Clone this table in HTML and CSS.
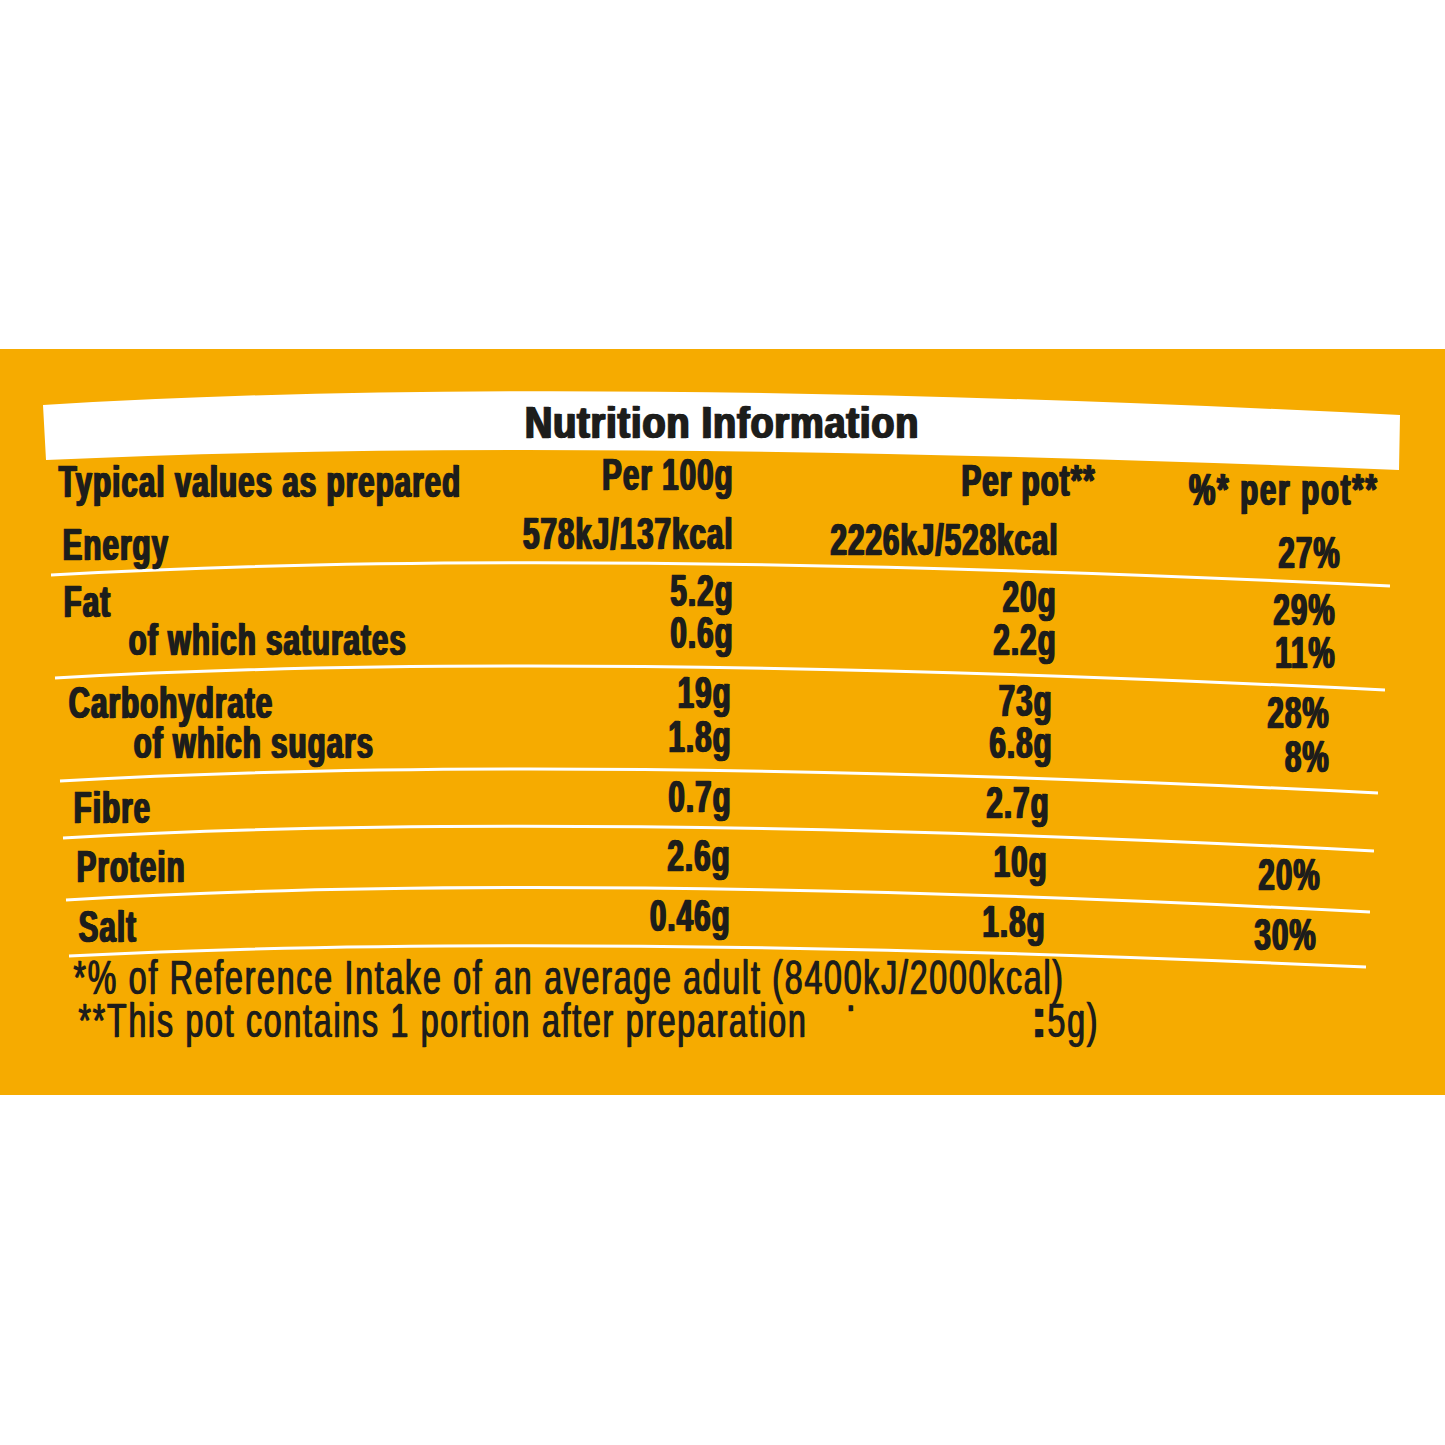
FILE: index.html
```html
<!DOCTYPE html>
<html lang="en">
<head>
<meta charset="utf-8">
<title>Nutrition Information</title>
<link rel="stylesheet" href="styles.css">
</head>
<body>
<section class="band">
  <h1 class="title"><span>Nutrition Information</span></h1>
  <div class="panel">
    <div class="row hdr">
      <span class="c1">Typical values as prepared</span>
      <span class="c2">Per 100g</span>
      <span class="c3">Per pot**</span>
      <span class="c4">%* per pot**</span>
    </div>
    <div class="row energy">
      <span class="c1">Energy</span>
      <span class="c2">578kJ/137kcal</span>
      <span class="c3">2226kJ/528kcal</span>
      <span class="c4">27%</span>
    </div>
    <div class="row fat">
      <span class="c1">Fat</span>
      <span class="c2">5.2g</span>
      <span class="c3">20g</span>
      <span class="c4">29%</span>
      <span class="c1 sub">of which saturates</span>
      <span class="c2 sub">0.6g</span>
      <span class="c3 sub">2.2g</span>
      <span class="c4 sub">11%</span>
    </div>
    <div class="row carb">
      <span class="c1">Carbohydrate</span>
      <span class="c2">19g</span>
      <span class="c3">73g</span>
      <span class="c4">28%</span>
      <span class="c1 sub">of which sugars</span>
      <span class="c2 sub">1.8g</span>
      <span class="c3 sub">6.8g</span>
      <span class="c4 sub">8%</span>
    </div>
    <div class="row fibre">
      <span class="c1">Fibre</span>
      <span class="c2">0.7g</span>
      <span class="c3">2.7g</span>
      <span class="c4"></span>
    </div>
    <div class="row protein">
      <span class="c1">Protein</span>
      <span class="c2">2.6g</span>
      <span class="c3">10g</span>
      <span class="c4">20%</span>
    </div>
    <div class="row salt">
      <span class="c1">Salt</span>
      <span class="c2">0.46g</span>
      <span class="c3">1.8g</span>
      <span class="c4">30%</span>
    </div>
    <div class="notes">
      <p class="fn fn1">*% of Reference Intake of an average adult (8400kJ/2000kcal)</p>
      <p class="fn fn2">**This pot contains 1 portion after preparation<span class="tick">.</span><span class="frag"><b class="dots">:</b>5g)</span></p>
    </div>
  </div>
</section>
</body>
</html>
```

FILE: styles.css
```css
* { box-sizing: border-box; }

:root { --k: 0.67; }

body {
  margin: 0;
  background: #ffffff;
  font-family: "Liberation Sans", Arial, sans-serif;
  color: #1d1d1b;
}

.band {
  margin-top: 349px;
  height: 746px;
  overflow: hidden;
  background: #f6ab00 url("data:image/svg+xml,%3Csvg xmlns='http://www.w3.org/2000/svg' width='1445' height='746' viewBox='0 0 1445 746'%3E%3Cpath fill='white' d='M43,56 Q560,24 1400,66 L1399,121 Q560,87 46,111 Z'/%3E%3Cg fill='none' stroke='white' stroke-width='3'%3E%3Cpath d='M51,226 Q560,197 1390,237'/%3E%3Cpath d='M55,329 Q560,300 1385,341'/%3E%3Cpath d='M60,432 Q560,403 1378,444'/%3E%3Cpath d='M63,489 Q560,460 1374,502'/%3E%3Cpath d='M66,551 Q560,521 1370,563'/%3E%3Cpath d='M69,607 Q560,582 1366,618'/%3E%3C/g%3E%3C/svg%3E") no-repeat 0 0;
}

.title {
  margin: 0;
  padding-top: 54px;
  height: 94px;
  text-align: center;
  font-size: 44px;
  line-height: 40px;
  font-weight: 700;
}

.title span {
  display: inline-block;
  margin-left: -2px;
  letter-spacing: 1px;
  transform: scaleX(0.86);
  text-shadow: 1.1px 0 0 currentColor, 2.2px 0 0 currentColor;
  -webkit-text-stroke: 0.5px currentColor;
}

.panel {
  width: calc(1445px / var(--k));
  padding-top: 19px;
  transform: scaleX(var(--k));
  transform-origin: 0 0;
  font-size: 44px;
  line-height: 40px;
  font-weight: 700;
}

.row {
  display: grid;
  grid-template-columns:
    calc((var(--c2) - var(--l)) / var(--k) - 380px)
    380px
    calc((var(--c3) - var(--c2)) / var(--k))
    calc((var(--c4) - var(--c3)) / var(--k));
  grid-auto-rows: 40px;
  padding-left: calc(var(--l) / var(--k));
  height: var(--h);
  align-items: start;
  white-space: nowrap;
  letter-spacing: 1.6px;
  text-shadow: 1.2px 0 0 currentColor, 2.4px 0 0 currentColor;
  -webkit-text-stroke: 0.6px currentColor;
}

.c1 { text-align: left; }
.c2, .c3, .c4 { text-align: right; }

.c2 { margin-top: -11px; }
.c3 { margin-top: -5px; }
.c4 { margin-top: 8px; margin-bottom: -8px; }

.c2.sub { margin-top: -7px; }
.c3.sub { margin-top: 0; }
.c4.sub { margin-top: 13px; margin-bottom: -13px; }
.c1.sub { padding-left: calc(65px / var(--k)); }

.hdr .c2 { margin-top: -7px; }
.hdr .c3 { margin-top: -1px; }
.hdr .c4 { letter-spacing: 2.6px; }

.hdr     { --l: 58px; --c2: 733px; --c3: 1095px; --c4: 1378px; --h: 63px; }
.energy  { --l: 62px; --c2: 733px; --c3: 1058px; --c4: 1340px; --h: 57px; }
.fat     { --l: 63px; --c2: 733px; --c3: 1056px; --c4: 1335px; --h: 101px; grid-auto-rows: 38px; }
.carb    { --l: 68px; --c2: 731px; --c3: 1052px; --c4: 1329px; --h: 105px; }
.fibre   { --l: 73px; --c2: 731px; --c3: 1049px; --c4: 1325px; --h: 59px; }
.protein { --l: 76px; --c2: 730px; --c3: 1047px; --c4: 1320px; --h: 60px; }
.salt    { --l: 78px; --c2: 730px; --c3: 1045px; --c4: 1316px; --h: 50px; }

.carb .c2 { margin-top: -10px; }
.carb .c3 { margin-top: -2px; }
.carb .c4 { margin-top: 10px; margin-bottom: -10px; }
.carb .c2.sub { margin-top: -6px; }
.carb .c3.sub { margin-top: 0; }
.carb .c4.sub { margin-top: 14px; margin-bottom: -14px; }

.notes {
  font-weight: 400;
  font-size: 48px;
  line-height: 42px;
  letter-spacing: 2.6px;
  white-space: nowrap;
  text-shadow: 1.5px 0 0 currentColor;
  -webkit-text-stroke: 0.3px currentColor;
}

.fn { margin: 0; }
.fn1 { padding-left: calc(73px / var(--k)); }
.fn2 { padding-left: calc(78px / var(--k)); }

.tick {
  margin-left: calc(40px / var(--k));
  font-weight: 700;
  font-size: 36px;
  vertical-align: 26px;
  line-height: 0;
}

.frag {
  margin-left: calc(176px / var(--k));
}

.dots {
  font-weight: 700;
  font-size: 56px;
  line-height: 0;
  margin-right: 2px;
  text-shadow: 2px 0 0 currentColor, 4px 0 0 currentColor;
}
```
